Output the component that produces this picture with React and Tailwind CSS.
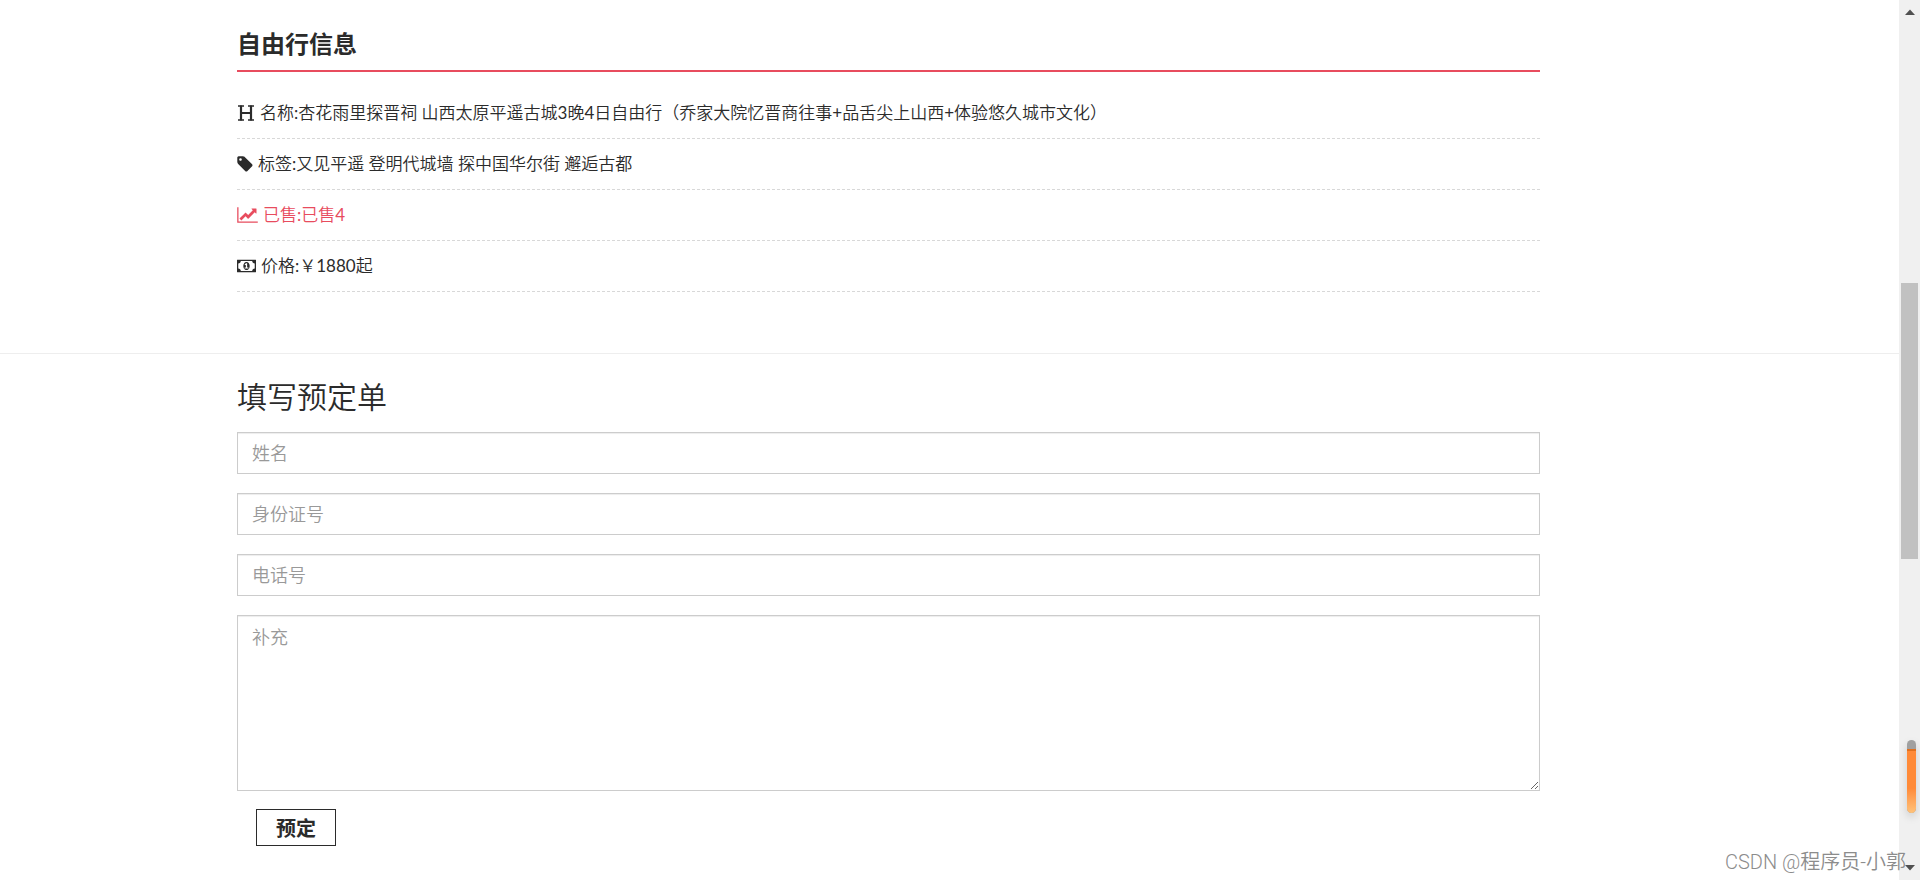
import clsx from 'clsx';

function HeaderIcon() {
  return (
    <svg viewBox="0 0 18 18" className="h-[18px] w-[18px]" fill="none" stroke="currentColor" aria-hidden="true">
      <path d="M4 1.5v15M14 1.5v15M4 9h10" strokeWidth="2.2" />
      <path d="M1 2h6M11 2h6M1 16h6M11 16h6" strokeWidth="1.4" />
    </svg>
  );
}

function TagIcon() {
  return (
    <svg viewBox="0 0 1536 1792" className="h-[18px] w-4" fill="currentColor" aria-hidden="true">
      <path d="M448 448q0-53-37.5-90.5t-90.5-37.5-90.5 37.5-37.5 90.5 37.5 90.5 90.5 37.5 90.5-37.5 37.5-90.5zm1067 576q0 53-37 90l-491 492q-39 37-91 37-53 0-90-37l-715-716q-38-37-64.5-101t-26.5-117v-416q0-52 38-90t90-38h416q53 0 117 26.5t102 64.5l715 714q37 39 37 91z" />
    </svg>
  );
}

function ChartIcon() {
  return (
    <svg viewBox="0 0 2048 1792" className="h-[18px] w-[21px]" fill="currentColor" aria-hidden="true">
      <path d="M2048 1536v128h-2048v-1536h128v1408h1920zm-128-1248v435q0 21-19.5 29.5t-35.5-7.5l-121-121-633 633q-10 10-23 10t-23-10l-233-233-416 416-192-192 585-585q10-10 23-10t23 10l233 233 464-464-121-121q-16-16-7.5-35.5t29.5-19.5h435q14 0 23 9t9 23z" />
    </svg>
  );
}

function MoneyIcon() {
  return (
    <svg viewBox="0 0 1920 1792" className="h-[18px] w-[19px]" fill="currentColor" aria-hidden="true">
      <path d="M768 1152h384v-96h-128v-448h-114l-148 137 77 80q42-37 55-57h2v288h-128v96zm512-256q0 70-21 142t-59.5 134-101.5 101-138 39-138-39-101.5-101-59.5-134-21-142 21-142 59.5-134 101.5-101 138-39 138 39 101.5 101 59.5 134 21 142zm512 256v-512q-106 0-181-75t-75-181h-1152q0 106-75 181t-181 75v512q106 0 181 75t75 181h1152q0-106 75-181t181-75zm128-832v1152q0 26-19 45t-45 19h-1792q-26 0-45-19t-19-45v-1152q0-26 19-45t45-19h1792q26 0 45 19t19 45z" />
    </svg>
  );
}

const INFO = [
  {
    icon: HeaderIcon,
    text: '名称:杏花雨里探晋祠 山西太原平遥古城3晚4日自由行（乔家大院忆晋商往事+品舌尖上山西+体验悠久城市文化）',
  },
  { icon: TagIcon, text: '标签:又见平遥 登明代城墙 探中国华尔街 邂逅古都' },
  { icon: ChartIcon, text: '已售:已售4', highlight: true },
  { icon: MoneyIcon, text: '价格:￥1880起' },
];

const FIELDS = [
  { name: 'name', label: '姓名', type: 'text' },
  { name: 'idcard', label: '身份证号', type: 'text' },
  { name: 'phone', label: '电话号', type: 'tel' },
];

const fieldClass =
  'block w-full border border-[#ccc] bg-white px-[14px] text-lg font-[350] text-[#2b2b2b] shadow-[inset_0_1px_1px_rgba(0,0,0,0.075)] outline-none placeholder:text-[#999]';

function TripInfo() {
  return (
    <section className="pt-5 pr-[359px] pb-[61px] pl-[237px]">
      <h4 className="border-b-2 border-[#e84c5e] pt-[9px] pb-[11px] text-2xl leading-[30px] font-bold">自由行信息</h4>
      <ul className="pt-4">
        {INFO.map(({ icon: Icon, text, highlight }) => (
          <li
            key={text}
            className={clsx(
              "flex min-h-[51px] items-center gap-[5px] border-b border-dashed border-[#d8d8d8] font-[Lato,'Noto_Sans_CJK_SC_DemiLight','Noto_Sans_CJK_SC',sans-serif] text-[17px] font-normal",
              highlight && 'text-[#e84c5e]'
            )}
          >
            <Icon />
            <span>{text}</span>
          </li>
        ))}
      </ul>
    </section>
  );
}

function BookingForm() {
  return (
    <form className="pt-5 pr-[359px] pb-[33px] pl-[237px]" onSubmit={(e) => e.preventDefault()}>
      <h2 className="mb-[13px] text-3xl leading-[45px] font-[350]">填写预定单</h2>
      <div className="flex flex-col gap-[19px]">
        {FIELDS.map((field) => (
          <input
            key={field.name}
            name={field.name}
            type={field.type}
            placeholder={field.label}
            aria-label={field.label}
            className={clsx(fieldClass, 'h-[42px]')}
          />
        ))}
        <textarea
          name="remark"
          placeholder="补充"
          aria-label="补充"
          className={clsx(fieldClass, 'h-44 resize py-[7px]')}
        />
      </div>
      <button
        type="submit"
        className="mt-[18px] ml-[19px] h-[37px] border border-[#2b2b2b] bg-white px-[19px] text-xl leading-none font-bold"
      >
        预定
      </button>
    </form>
  );
}

function ScrollRail() {
  return (
    <div className="relative flex w-[21px] shrink-0 flex-col items-center justify-between bg-[#f0f0f0] py-[9px]">
      <svg viewBox="0 0 10 6" className="h-[6px] w-[10px]" fill="#505050" aria-hidden="true">
        <path d="M5 0.5L10 6H0z" />
      </svg>
      <svg viewBox="0 0 10 6" className="h-[6px] w-[10px]" fill="#505050" aria-hidden="true">
        <path d="M5 5.5L10 0H0z" />
      </svg>
      <div className="absolute top-[283px] left-[2px] h-[276px] w-[17px] bg-[#c1c1c1]" />
      <div className="absolute top-[740px] left-2 h-[73px] w-[9px] overflow-hidden rounded-full bg-[#a0a0a0] shadow-[0_4px_8px_rgba(0,0,0,0.15)]">
        <div className="mt-[9px] h-16 border-t-2 border-[#e0701f] bg-linear-to-b from-[#ff8a38] from-60% to-[#ffc27a]" />
      </div>
    </div>
  );
}

export default function App() {
  return (
    <div className="relative flex min-h-screen bg-white font-[Lato,'Noto_Sans_CJK_SC',sans-serif] text-[#2b2b2b]">
      <main className="min-w-0 flex-1">
        <TripInfo />
        <hr className="border-[#eee]" />
        <BookingForm />
      </main>
      <ScrollRail />
      <p className="absolute right-[14px] bottom-1 font-[Roboto,'Noto_Sans_CJK_SC',sans-serif] text-xl leading-7 font-[350] text-[#8c8c8c] [text-shadow:-1px_-1px_0_#fff]">
        CSDN @程序员-小郭
      </p>
    </div>
  );
}
